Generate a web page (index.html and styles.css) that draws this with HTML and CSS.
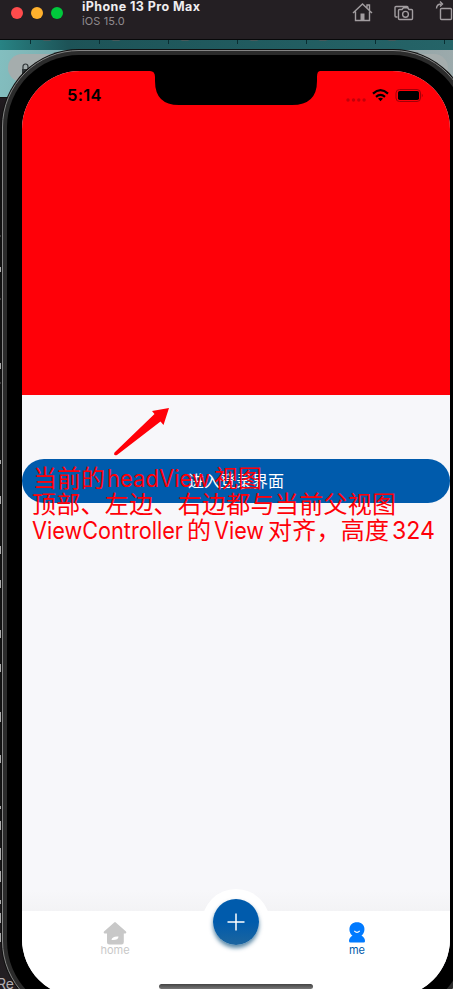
FILE: index.html
```html
<!DOCTYPE html>
<html lang="zh-CN">
<head>
<meta charset="utf-8">
<title>iPhone 13 Pro Max</title>
<link rel="stylesheet" href="styles.css">
</head>
<body>
<header class="titlebar">
  <div class="lights"><i class="red"></i><i class="amber"></i><i class="green"></i></div>
  <div class="device"><strong>iPhone 13 Pro Max</strong><span>iOS 15.0</span></div>
  <svg class="tools" width="102" height="24" viewBox="0 0 102 24" fill="none" stroke="#a29da0" stroke-width="1.4">
    <path d="M2 13 11.500 4l9.500 9M4.500 11.500v9h14v-9M16 8V5h2.500v5"/><path d="M9.500 13.500h4v7h-4z" fill="#a29da0" stroke="none"/>
    <path d="M46.500 17h-1.500q-1 0-1-1V7.500q0-1 1-1h11q1 0 1 1.500"/><path d="M48.500 9.500h2.500l1.500-1.800h4l1.500 1.800h2.500q1 0 1 1v8q0 1-1 1H48.500q-1 0-1-1v-8q0-1 1-1"/><circle cx="54.500" cy="14.300" r="2.900"/>
    <rect x="89.500" y="8.500" width="11" height="11" rx="1"/><path d="M85.500 8.500q0-4.500 5-4.500M89 1.500 91.500 4 89 6.500"/>
  </svg>
</header>
<main class="desktop">
  <div class="browser">
    <div class="tabs"><i></i><i></i><i></i><i></i><i></i><i></i><i></i></div>
    <div class="address">
      <svg width="9" height="14" viewBox="0 0 9 14"><path d="M1 6h7v7H1z" fill="#303638"/><path d="M2 6V3.500a2.500 2.500 0 0 1 5 0V6" fill="none" stroke="#303638" stroke-width="1.200"/></svg>
    </div>
    <div class="editor"><span class="stub">Re</span>
      <svg class="edge" width="3" height="891" viewBox="0 98 3 891"><path d="M0 236h3M0 299h3M0 383h3" stroke="#666"/><path d="M.500 267v5M.500 363v6M.500 460v4M.500 496v8M.500 546v8M.500 580v8M.500 630v8M.500 664v8M.500 712v10M.500 755v8M.500 806v3M.500 821v9M.500 848v12M.500 871v11M.500 900v4M.500 913v10M.500 933v9" stroke="#aaa"/></svg>
    </div>
  </div>
  <section class="phone">
    <div class="bezel">
      <div class="screen">
        <div class="head">
          <svg class="notch" width="170" height="34" viewBox="0 0 170 34"><path d="M0 0Q5 0 5 6v4Q5 34 29 34H142Q167 34 167 10V6Q167 0 170 0Z"/></svg>
          <div class="status">
            <span class="time">5:14</span>
            <svg width="78" height="18" viewBox="0 0 78 18">
              <g fill="#c3000a"><circle cx="3" cy="13" r="1.700"/><circle cx="8.500" cy="13" r="1.700"/><circle cx="13.800" cy="13" r="1.700"/><circle cx="19.100" cy="13" r="1.700"/></g>
              <g fill="none" stroke="#000" stroke-width="2.200"><path d="M28 6.600Q35.500-.2 43 6.600M31 9.800q4.500-3.800 9 0"/></g><path d="M33 11.600q2.500-1.800 5 0l-2.500 2.700Z"/>
              <rect x="51" y="2.500" width="24.500" height="12" rx="3.500" fill="none" stroke="#a00008"/><rect x="53" y="4" width="21" height="9" rx="1.800"/><path d="M76.800 6.500q1.700 2 0 4Z" fill="#a00008"/>
            </svg>
          </div>
        </div>
        <div class="content"><button class="login">进入登录界面</button></div>
        <nav class="tabbar">
          <div class="tab"><svg width="24" height="24" viewBox="0 0 24 24"><path d="M11.200 1.400Q12 .7 12.800 1.400L23 10.500Q24 12 22.500 12.500H20.800V21Q20.800 23.500 18.500 23.500H6.500Q4 23.500 4 21V12.500H1.500Q0 12 1 10.500Z" fill="#c8c8c8"/><path d="M8.500 19q.5-4 7-3.500 0 4-7 3.500" fill="#fff"/></svg><span>home</span></div>
          <div class="add"><div class="plus"><svg width="18" height="18" viewBox="0 0 18 18"><path d="M9 .5v17M.5 9h17" stroke="#fff" stroke-width="1.500"/></svg></div></div>
          <div class="tab active"><svg width="24" height="24" viewBox="0 0 24 24"><path d="M12 1.200C2.800 1.200 3 11.500 7.500 14.600Q4 17 4 20Q4 21.500 5.500 21.500H18.500Q20.200 21.500 20 20Q20 17 16.500 14.600C21 11.500 21.200 1.200 12 1.200Z" fill="#007aff"/><path d="M9.300 9.800q2.700 3 5.400 0" fill="none" stroke="#fff" stroke-width="1.200"/></svg><span>me</span></div>
          <div class="indicator"></div>
        </nav>
      </div>
    </div>
  </section>
  <svg class="note" width="453" height="150" viewBox="0 400 453 150">
    <path d="M169 408 163.500 425 160.500 421.500 117 455Q113 456 114.500 452.500L154.500 414 152 411Z"/>
    <text x="33" y="486.500" textLength="72">当前的</text><text x="107" y="486.500" textLength="103" lengthAdjust="spacingAndGlyphs">headView</text><text x="214" y="486.500" textLength="48">视图</text>
    <text x="32" y="513" textLength="364">顶部、左边、右边都与当前父视图</text>
    <text x="32" y="539" textLength="151" lengthAdjust="spacingAndGlyphs">ViewController</text><text x="187" y="539">的</text><text x="214" y="539" textLength="50" lengthAdjust="spacingAndGlyphs">View</text><text x="268" y="539" textLength="121">对齐，高度</text><text x="392" y="539" textLength="43" lengthAdjust="spacingAndGlyphs">324</text>
  </svg>
</main>
</body>
</html>
```
FILE: styles.css
```css
* { box-sizing: border-box; }
body { margin: 0; width: 453px; height: 989px; overflow: hidden; background: #111; font-family: Inter, "Noto Sans CJK SC", sans-serif; }
.titlebar { height: 40px; background: #241f23; border-bottom: 1px solid #08090a; display: flex; align-items: flex-start; overflow: hidden; }
.lights { display: flex; gap: 8px; padding: 7px 0 0 11px; width: 82px; }
.lights i { width: 12px; height: 12px; border-radius: 50%; }
.red { background: #ff4b4c; }
.amber { background: #ffb12d; }
.green { background: #00c83c; }
.device { width: 269px; display: flex; flex-direction: column; }
.device strong { font-size: 12.5px; line-height: 14px; color: #f0eef0; letter-spacing: .42px; }
.device span { font-size: 11px; line-height: 14px; color: #918c90; letter-spacing: .1px; }
.tools { flex: none; }
.desktop { position: relative; height: 949px; overflow: hidden; }
.browser { position: absolute; inset: 0; background: linear-gradient(100deg, #83bfc0, #738e91 30%, #b4bbbc); }
.tabs { height: 10px; display: flex; padding-left: 30px; background: linear-gradient(90deg, #288384, #1d5357 15%, #256468); }
.tabs i { flex: none; width: 69px; height: 4px; border-left: 1px solid #092e32; background: radial-gradient(ellipse at 16px 0, #46595b 7px, transparent 8px); }
.address { height: 28px; width: 440px; margin: 4px 0 0 8px; border-radius: 14px; background: #a5adad; padding: 7px 13px; }
.editor { position: relative; height: 893px; margin-top: 15px; background: linear-gradient(#211b20, #111 5%, #151515 80%, #241f23); border-top: 1px solid #111; }
.edge { position: absolute; left: 0; top: 0; }
.stub { position: absolute; left: -3px; top: 878px; color: #b5b0b3; font-size: 14px; line-height: 16px; }
.phone { position: relative; width: 468px; height: 968px; margin: 10px 0 0 2px; border: 1px solid #858585; border-radius: 77px; background: #2b2b2b; padding: 4px; box-shadow: 0 0 0 1px #111; }
.bezel { height: 958px; border-radius: 72px; background: #000; padding: 16px 15px; }
.screen { width: 428px; height: 926px; border-radius: 58px; overflow: hidden; background: #f6f6f9; display: flex; flex-direction: column; }
.head { height: 324px; background: #ff0008; position: relative; flex: none; }
.notch { position: absolute; left: 128px; top: 0; }
.status { display: flex; justify-content: space-between; padding: 15px 27px 0 45px; }
.status svg { margin-top: 1px; }
.time { font-size: 16.5px; line-height: 18px; font-weight: 600; color: #000; letter-spacing: .3px; }
.content { height: 516px; padding-top: 64px; flex: none; background: linear-gradient(#f7f7fa 96%, #f3f3f5); }
.login { display: block; width: 428px; height: 44px; border: 0; border-radius: 22px; background: #005bac; color: #fff; font: 16px/44px Inter, "Noto Sans CJK SC", sans-serif; padding: 0; }
.tabbar { position: relative; height: 86px; background: #fff; display: flex; justify-content: center; gap: 37px; }
.tab { width: 100px; display: flex; flex-direction: column; align-items: center; padding-top: 10px; font-size: 11px; line-height: 11px; color: #c8c8c8; }
.active { color: #005bac; }
.add { width: 68px; height: 68px; margin-top: -22px; border-radius: 50%; background: #fff; padding: 10px 11px; }
.plus { width: 46px; height: 46px; border-radius: 50%; background: linear-gradient(#005bac 50%, #1c659f); box-shadow: 0 3px 4px #0b507cb0; display: flex; align-items: center; justify-content: center; }
.indicator { position: absolute; left: 137px; top: 73px; width: 154px; height: 5px; border-radius: 3px; background: linear-gradient(#444, #777); }
.note { position: absolute; left: 0; top: 360px; fill: #ff0008; font-family: Inter, "Noto Sans CJK SC", sans-serif; font-size: 24px; }
```
